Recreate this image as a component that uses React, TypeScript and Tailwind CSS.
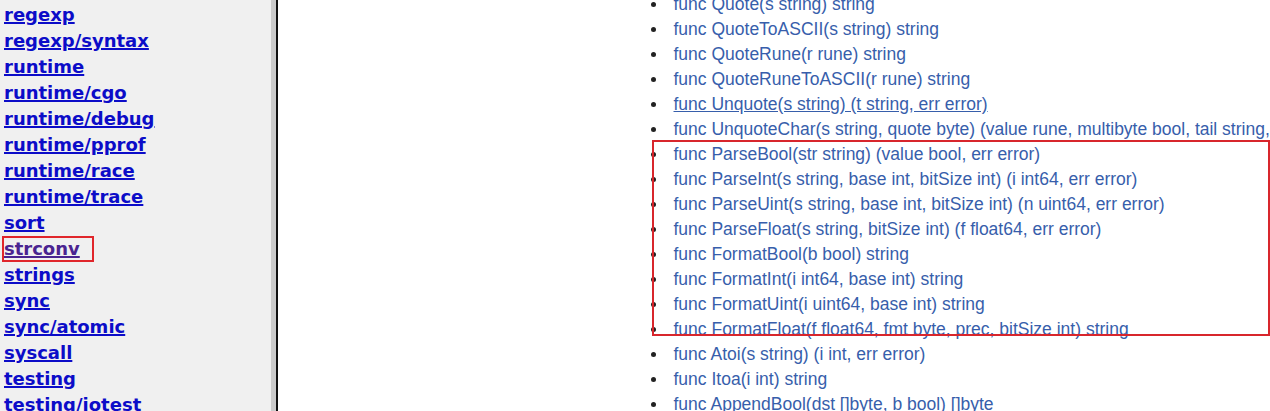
const packages = [
  "regexp",
  "regexp/syntax",
  "runtime",
  "runtime/cgo",
  "runtime/debug",
  "runtime/pprof",
  "runtime/race",
  "runtime/trace",
  "sort",
  "strconv",
  "strings",
  "sync",
  "sync/atomic",
  "syscall",
  "testing",
  "testing/iotest",
]

const funcs = [
  "func Quote(s string) string",
  "func QuoteToASCII(s string) string",
  "func QuoteRune(r rune) string",
  "func QuoteRuneToASCII(r rune) string",
  "func Unquote(s string) (t string, err error)",
  "func UnquoteChar(s string, quote byte) (value rune, multibyte bool, tail string, err error)",
  "func ParseBool(str string) (value bool, err error)",
  "func ParseInt(s string, base int, bitSize int) (i int64, err error)",
  "func ParseUint(s string, base int, bitSize int) (n uint64, err error)",
  "func ParseFloat(s string, bitSize int) (f float64, err error)",
  "func FormatBool(b bool) string",
  "func FormatInt(i int64, base int) string",
  "func FormatUint(i uint64, base int) string",
  "func FormatFloat(f float64, fmt byte, prec, bitSize int) string",
  "func Atoi(s string) (i int, err error)",
  "func Itoa(i int) string",
  "func AppendBool(dst []byte, b bool) []byte",
]

export default function App() {
  return (
    <div className="flex h-[411px] w-[1270px] overflow-hidden bg-white">
      {/* package index */}
      <nav className="relative w-[271px] shrink-0 bg-[#f0f0f0] pt-[2px] pl-1 font-['DejaVu_Sans',sans-serif] text-[18px] leading-[26px] font-bold">
        {packages.map((p) => (
          <div key={p}>
            <a
              href="#"
              className={`underline decoration-2 ${p === "strconv" ? "text-[#4a2390]" : "text-[#0c0cc8]"}`}
            >
              {p}
            </a>
          </div>
        ))}
        <div className="pointer-events-none absolute top-[236px] left-[2px] h-[26px] w-[92px] border-2 border-[#e0262b]" />
      </nav>
      <div className="w-[5px] shrink-0 bg-[#cbcbcb]" />
      <div className="w-[1.5px] shrink-0 bg-[#111]" />

      {/* function index */}
      <main className="relative flex-1 overflow-hidden">
        <ul className="-mt-[8px] pl-[373px] font-['Liberation_Sans',Arial,sans-serif] text-[17.5px] leading-[25px] text-[#375eab]">
          {funcs.map((f) => (
            <li key={f} className="flex items-center whitespace-nowrap">
              <span className="mr-[18px] h-[5px] w-[5px] shrink-0 rounded-full bg-[#222]" />
              <span className={f.startsWith("func Unquote(") ? "underline" : ""}>{f}</span>
            </li>
          ))}
        </ul>
        <div className="pointer-events-none absolute top-[140px] left-[374px] h-[196px] w-[618px] border-2 border-[#d8262c]" />
      </main>
    </div>
  )
}
